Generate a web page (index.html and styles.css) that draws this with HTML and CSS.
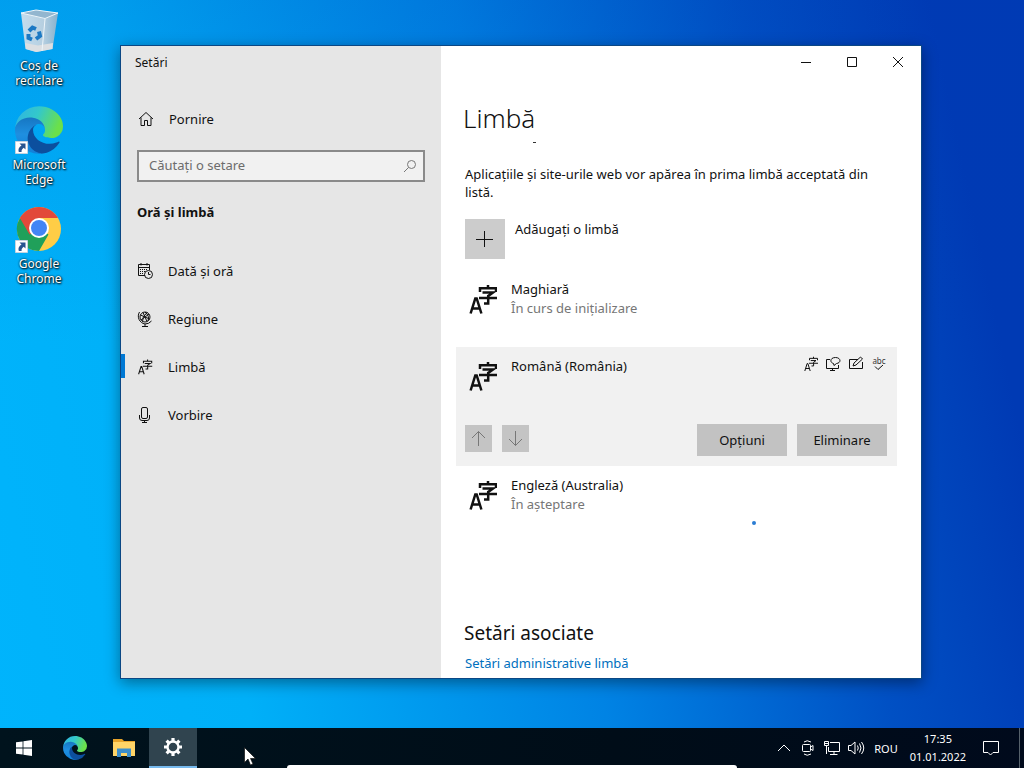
FILE: index.html
```html
<!DOCTYPE html>
<html lang="ro">
<head>
    <meta charset="UTF-8">
    <meta name="viewport" content="width=device-width, initial-scale=1.0">
    <title>Setări</title>
    <link rel="stylesheet" href="styles.css">
</head>
<body>
    <!-- Shared icons -->
    <svg class="defs" aria-hidden="true">
        <defs>
            <linearGradient id="edge-blue" x1="0" y1="0" x2="0" y2="1"><stop offset="0" stop-color="#1573be"/><stop offset="0.5" stop-color="#1f8fe0"/><stop offset="1" stop-color="#1180d8"/></linearGradient>
            <linearGradient id="edge-green" x1="0" y1="0" x2="1" y2="0.3"><stop offset="0" stop-color="#2fb2e4"/><stop offset="0.5" stop-color="#33c8cb"/><stop offset="1" stop-color="#6be04a"/></linearGradient>
            <linearGradient id="bin-side" x1="0" y1="0" x2="1" y2="0"><stop offset="0" stop-color="#d3e2ee"/><stop offset="0.6" stop-color="#c6d3df"/><stop offset="1" stop-color="#93b3cb"/></linearGradient>
        </defs>
        <symbol id="i-lang" viewBox="0 0 28 31">
            <path d="M1.6 29.5L6.3 14.5H7.7L12.4 29.5M3.4 24.5H10.6M11 8V4.2H27V8M19 1V4M13.5 8.6H24L19.2 12V19.4H15M10 14H28" fill="none" stroke="currentColor"/>
        </symbol>
        <symbol id="i-edge" viewBox="0 0 256 256">
            <path fill="#0c4f9e" d="M231 190.5c-3.4 1.8-6.9 3.4-10.5 4.7a101.7 101.7 0 0 1-35.9 6.5c-47.3 0-88.5-32.6-88.5-74.3 0-11.4 6.4-21.8 16.6-27.3-42.8 1.8-53.8 46.4-53.8 72.5 0 73.9 68.1 81.4 82.8 81.4 7.9 0 19.8-2.3 27-4.6l1.3-.4a128 128 0 0 0 66.6-52.8 4 4 0 0 0-5.6-5.7z"/>
            <path fill="url(#edge-blue)" d="M105.7 241.4a79.2 79.2 0 0 1-22.7-21.3 80.7 80.7 0 0 1 29.5-120c3.2-1.5 8.5-4.2 15.6-4.1a32.4 32.4 0 0 1 25.7 13 31.9 31.9 0 0 1 6.3 18.7c0-.2 24.5-79.6-80-79.6-43.9 0-80 41.7-80 78.2 0 19.3 4 38.7 12.2 56.2a128 128 0 0 0 152.1 66.5 75.5 75.5 0 0 1-58.5-7.6z"/>
            <path fill="url(#edge-green)" d="M152.3 148.9c-.8 1-3.3 2.5-3.3 5.7 0 2.6 1.7 5.1 4.7 7.2 14.4 10 41.5 8.7 41.6 8.7 10.7 0 21.1-2.9 30.3-8.3a61.4 61.4 0 0 0 30.4-52.9c.3-22.4-8-37.3-11.3-43.9C223.5 24.5 177.8 1 128 1a128 128 0 0 0-128 126.2c.5-36.5 36.8-66 80-66 3.5 0 23.5.3 42 10.1 16.3 8.6 24.9 18.9 30.8 29.2 6.2 10.7 7.3 24.1 7.3 29.5 0 5.3-2.7 13.3-7.8 19.9z"/>
        </symbol>
        <symbol id="i-shortcut" viewBox="0 0 13 13">
            <path fill="#fff" stroke="#c5d3df" d="M.5.5h12v12H.5z"/>
            <path fill="#27548f" d="M4.5 2.5H10.500V8.500L8.700 6.700C7 8 6.300 9.300 6.600 11H3.800C2.800 8.200 4 6 6.500 4.500z"/>
        </symbol>
    </svg>

    <div class="desktop">
        <nav class="shortcuts">
            <a class="shortcut" href="#">
                <svg width="48" height="48" viewBox="4 0 48 48">
                    <path fill="url(#bin-side)" d="M10 6L47 6L41.500 42L25 45L14.500 42z" opacity=".92"/>
                    <path fill="#93b6cf" d="M10 6L25 3L47 6L34 12z"/>
                    <path fill="#dcdfe2" d="M14 36L27 38.500L42 36L41.500 42L25.500 45L15 42z"/>
                    <path fill="none" stroke="#edf5fa" d="M10 6L25 3L47 6L34 11.500zM34 12L31 44"/>
                    <path fill="none" stroke="#1c79c4" stroke-width="4" d="M18 24L21.500 20.500L25 22M28 24.500L29 29L25 32M21 32.500L17.500 31L17.500 27"/>
                </svg>
                <span>Coș de<br>reciclare</span>
            </a>
            <a class="shortcut" href="#">
                <svg width="48" height="48" viewBox="0 0 48 48">
                    <use href="#i-edge" width="48" height="48"/>
                    <use href="#i-shortcut" y="35" width="13" height="13"/>
                </svg>
                <span>Microsoft<br>Edge</span>
            </a>
            <a class="shortcut" href="#">
                <svg width="48" height="48" viewBox="0 0 48 48">
                    <circle cx="24" cy="24" r="22" fill="#ffcd46"/>
                    <path fill="#20a05a" d="M24 24L4.900 13A22 22 0 0 0 24 46L33.500 29.500z"/>
                    <path fill="#e2493a" d="M24 24L14.500 29.500L4.900 13A22 22 0 0 1 43 13L24 13z"/>
                    <circle cx="24" cy="23" r="10" fill="#fff"/>
                    <circle cx="24" cy="23" r="8" fill="#4385f5"/>
                    <use href="#i-shortcut" y="35" width="13" height="13"/>
                </svg>
                <span>Google<br>Chrome</span>
            </a>
        </nav>

        <div class="window">
            <aside class="sidebar">
                <div class="window-title">Setări</div>
                <a class="home" href="#">
                    <svg width="16" height="16" viewBox="0 0 16 16"><path d="M1 8L8 1.500L15 8M3 6.500V14.500H6.500V9.500H9.500V14.500H13V6.500"/></svg>
                    Pornire
                </a>
                <label class="search">
                    <input type="text" placeholder="Căutați o setare" aria-label="Căutați o setare">
                    <svg width="14" height="14" viewBox="0 0 14 14"><circle cx="8.500" cy="5.500" r="4"/><path d="M5.500 8.500L1 13"/></svg>
                </label>
                <h2 class="category">Oră și limbă</h2>
                <nav class="menu">
                    <a href="#">
                        <svg width="16" height="16" viewBox="0 0 16 16"><path d="M8 12.500H1.500V1.500H12.500V7M1.500 4.500H12.500M4 0V2.500M10 0V2.500"/><path stroke-dasharray="1 1" d="M3 6.500H11M3 8.500H8M3 10.500H7"/><circle cx="11.500" cy="11.500" r="4"/><path d="M11.500 9V11.500H13.500"/></svg>
                        Dată și oră
                    </a>
                    <a href="#">
                        <svg width="16" height="16" viewBox="0 0 16 16"><circle cx="8" cy="6" r="5"/><path d="M3.500 4L12.500 8M4 9L12 3M6 1.500L10 10.500M10 1.500Q5 6 5.500 10.500M8 1Q13 5 11 10M2.500 1C-.5 6 2.500 12 8 13Q12 13 14.500 10M8 13V15.500M5 15.500H11"/></svg>
                        Regiune
                    </a>
                    <a class="active" href="#">
                        <svg width="16" height="16" stroke-width="2"><use href="#i-lang"/></svg>
                        Limbă
                    </a>
                    <a href="#">
                        <svg width="16" height="16" viewBox="0 0 16 16"><rect x="4.500" y=".5" width="6" height="11" rx="1.500"/><path d="M2.500 8V11Q2.500 13.500 5 13.500H10Q12.500 13.500 12.500 11V8M7.500 13.500V15.500M5 15.500H10"/></svg>
                        Vorbire
                    </a>
                </nav>
            </aside>

            <main class="content">
                <div class="caption">
                    <button aria-label="Minimizare"><svg width="12" height="12"><path d="M1 6.500H11"/></svg></button>
                    <button aria-label="Maximizare"><svg width="12" height="12"><path d="M1.500 1.500H10.500V10.500H1.500z"/></svg></button>
                    <button aria-label="Închidere"><svg width="12" height="12"><path d="M1 1L11 11M11 1L1 11"/></svg></button>
                </div>
                <div class="page">
                    <h1>Limbă</h1>
                    <div class="scrolled-edge"></div>
                    <p class="intro">Aplicațiile și site-urile web vor apărea în prima limbă acceptată din listă.</p>
                    <button class="add">
                        <span class="add-icon"><svg width="18" height="18"><path d="M8.500 1V17M0 9.500H17"/></svg></span>
                        Adăugați o limbă
                    </button>

                    <ul class="languages">
                        <li class="language">
                            <div class="language-head">
                                <svg class="language-icon" width="28" height="31"><use href="#i-lang"/></svg>
                                <div>Maghiară<small>În curs de inițializare</small></div>
                            </div>
                        </li>
                        <li class="language selected">
                            <div class="language-head">
                                <svg class="language-icon" width="28" height="31"><use href="#i-lang"/></svg>
                                <div>Română (România)</div>
                                <div class="features">
                                    <svg width="14" height="16" stroke-width="2"><use href="#i-lang"/></svg>
                                    <svg width="16" height="16" viewBox="0 0 16 16"><path d="M5 3.500H1.500V12.500H13.500V9M7.500 12.500V14.500M5 14.500H10"/><path d="M8.500 7.500C4.500 6.500 5 1.500 10.500 1.500C16 1.500 16.500 7 11.500 7.500L9 9.500z"/></svg>
                                    <svg width="16" height="16" viewBox="0 0 16 16"><path d="M10 3.500H1.500V12.500H14.500V6M5 10L6 7L12.500 1L14.500 3L8 9z"/></svg>
                                    <div class="spelling">abc<svg width="12" height="6"><path d="M2 1.500L5 4.500L10 0"/></svg></div>
                                </div>
                            </div>
                            <div class="actions">
                                <button class="move" aria-label="Sus" disabled><svg width="17" height="17"><path d="M8.500 16V1.500M2 8L8.500 1.500L15 8"/></svg></button>
                                <button class="move" aria-label="Jos" disabled><svg width="17" height="17"><path d="M8.500 1V15.500M2 9L8.500 15.500L15 9"/></svg></button>
                                <button class="action first">Opțiuni</button>
                                <button class="action">Eliminare</button>
                            </div>
                        </li>
                        <li class="language last">
                            <div class="language-head">
                                <svg class="language-icon" width="28" height="31"><use href="#i-lang"/></svg>
                                <div>Engleză (Australia)<small>În așteptare</small></div>
                            </div>
                            <div class="progress"></div>
                        </li>
                    </ul>

                    <h2 class="related">Setări asociate</h2>
                    <a class="link" href="#">Setări administrative limbă</a>
                </div>
            </main>
        </div>
    </div>

    <footer class="taskbar">
        <button class="task" aria-label="Start"><svg width="16" height="16" viewBox="0 0 16 16"><path fill="#fff" d="M0 2.300L6.600 1.400V7.600H0zM7.400 1.300L16 0V7.600H7.400zM0 8.400H6.600V14.600L0 13.700zM7.400 8.400H16V16L7.400 14.800z"/></svg></button>
        <button class="task edge" aria-label="Microsoft Edge"><svg width="24" height="24"><use href="#i-edge"/></svg></button>
        <button class="task" aria-label="Explorer">
            <svg width="22" height="18" viewBox="0 0 22 18"><path fill="#e7a42b" d="M0 0H9L11 2H22V6H0z"/><path fill="#ffd467" d="M0 3H22V17H0z"/><path fill="#3c8ecb" d="M4 18V9.500H18V18H14V14H8V18z"/></svg>
        </button>
        <button class="task running" aria-label="Setări">
            <svg width="20" height="20" viewBox="0 0 20 20"><circle cx="10" cy="10" r="5.500" fill="none" stroke="#fff" stroke-width="2.400"/><path stroke="#fff" stroke-width="3.200" d="M16 10H19M1 10H4M10 1V4M10 16V19M14.200 5.800L16.400 3.600M3.600 16.400L5.800 14.200M3.600 3.600L5.800 5.800M14.200 14.200L16.400 16.400"/></svg>
        </button>
        <div class="tray">
            <svg width="18" height="16" viewBox="0 0 18 16"><path d="M3 11L9 5L15 11"/></svg>
            <svg width="18" height="16" viewBox="0 0 18 16"><rect x="3.500" y="4.500" width="8" height="7" rx="1"/><path d="M11.500 7L14 5.500V10.500L11.500 9M5 2Q8 -.5 12 2M5 14Q8 16.500 12 14"/></svg>
            <svg width="18" height="16" viewBox="0 0 18 16"><path d="M7 2.500H16.500V11.500H5.500V7M11 11.500V14.500M7 14.500H14.500M1.500 1.500H5.500V5.500H1.500zM3.500 5.500V14M2 3.500H5"/></svg>
            <svg width="18" height="16" viewBox="0 0 18 16"><path d="M1.500 5.500H4L8 2V14L4 10.500H1.500zM10.500 5.500Q12 8 10.500 10.500M12.500 3.500Q15.500 8 12.500 12.500M14.500 2Q19 8 14.500 14"/></svg>
            <span class="keyboard">ROU</span>
            <time class="clock">17:35<br>01.01.2022</time>
            <svg width="18" height="18" viewBox="0 0 18 18"><path d="M1.500 2.500H16.500V13.500H11L8.500 16L6 13.500H1.500z"/></svg>
        </div>
        <div class="show-desktop"></div>
    </footer>

    <div class="home-bar"></div>
    <svg class="cursor" width="12" height="19" viewBox="0 0 12 19"><path fill="#fff" stroke="#111" stroke-width=".7" d="M.5.5V15.500L4 12L6.500 18L9 17L6.500 11.500H11.500z"/></svg>
</body>
</html>
```
FILE: styles.css
```css
* { box-sizing: border-box; }
html, body { height: 100%; }
body { margin: 0; display: flex; flex-direction: column; overflow: hidden; font-family: "Noto Sans", "Open Sans", sans-serif; font-size: 13px; color: #111; background: linear-gradient(180deg, rgba(0, 60, 180, 0.16), transparent 45%), linear-gradient(78deg, #00b4fc 0%, #00b0f8 22%, #0083e4 52%, #0050c4 76%, #003ab4 92%); }
h1, h2, p, ul { margin: 0; padding: 0; font-weight: normal; }
a { color: inherit; text-decoration: none; }
button { font: inherit; color: inherit; border: none; padding: 0; background: none; }
svg { flex-shrink: 0; display: block; }
.defs { position: absolute; width: 0; height: 0; }

/* Desktop */
.desktop { flex: 1; position: relative; min-height: 0; }
.shortcuts { display: flex; flex-direction: column; gap: 18px; width: 78px; padding-top: 7px; }
.shortcut { display: flex; flex-direction: column; align-items: center; gap: 3px; text-align: center; font-size: 12px; line-height: 15px; color: #fff; text-shadow: 1px 1px 2px #000, 0 0 2px #000; }

/* Settings window */
.window { position: absolute; top: 45px; right: 102px; bottom: 49px; left: 120px; display: flex; overflow: hidden; border: 1px solid #0b4784; background: #fff; box-shadow: 0 4px 14px rgba(0, 0, 0, 0.4); }
.sidebar { width: 320px; flex-shrink: 0; background: #e6e6e6; }
.sidebar svg { fill: none; stroke: #111; }
.window-title { padding: 8px 14px; font-size: 12px; line-height: 18px; }
.home { display: flex; align-items: center; gap: 15px; height: 40px; margin-top: 19px; padding-left: 17px; }
.search { display: flex; align-items: center; height: 32px; margin: 11px 16px 0; padding: 0 6px 0 10px; border: 2px solid #8a8a8a; background: #f1f1f1; }
.search input { flex: 1; min-width: 0; padding: 0 0 2px; border: none; outline: none; font: inherit; background: none; }
.search input::placeholder { color: #6c6c6c; opacity: 1; }
.search svg { stroke: #777; }
.category { margin: 20px 16px 0; font-size: 13px; line-height: 20px; font-weight: bold; }
.menu { margin-top: 25px; }
.menu a { display: flex; align-items: center; gap: 15px; height: 48px; padding-left: 16px; position: relative; }
.menu .active::before { content: ""; position: absolute; left: 0; top: 11px; width: 4px; height: 24px; background: #0078d4; }

.content { flex: 1; min-width: 0; }
.caption { display: flex; justify-content: flex-end; }
.caption button { width: 46px; height: 32px; display: flex; align-items: center; justify-content: center; }
.caption svg, .add svg, .move svg { fill: none; stroke: #111; }
.page { padding: 22px 24px 0 15px; }
h1 { padding-left: 7px; font-size: 26px; line-height: 36px; font-weight: 300; }
.scrolled-edge { width: 3px; height: 1px; margin: 6px 0 22px 77px; background: #333; }
.intro { padding: 0 9px; line-height: 18px; }
.add { display: flex; gap: 10px; margin: 18px 9px 11px; line-height: 20px; }
.add-icon { display: flex; align-items: center; justify-content: center; width: 40px; height: 40px; background: #ccc; }

.languages { list-style: none; }
.language { min-height: 77px; padding: 10px 10px 10px 9px; }
.language-head { display: flex; gap: 14px; line-height: 19px; }
.language-head small { display: block; font-size: 13px; color: #767676; }
.language-icon { margin: 4px 0 0 4px; stroke-width: 2.5; }
.selected { min-height: 118px; background: #f1f1f1; }
.features { display: flex; gap: 7px; margin-left: auto; margin-top: -1px; }
.features svg { fill: none; stroke: #111; }
.spelling { display: flex; flex-direction: column; align-items: center; width: 16px; font-size: 8px; line-height: 9px; color: #333; }
.actions { display: flex; gap: 10px; margin-top: 32px; }
.move { display: flex; align-items: center; justify-content: center; width: 27px; height: 27px; margin-top: 1px; background: #c4c4c4; }
.move svg { stroke: #777; }
.action { width: 90px; height: 32px; background: #c2c2c2; }
.action.first { margin-left: auto; }
.last { min-height: 153px; }
.progress { width: 4px; height: 4px; margin: 7px 0 0 287px; border-radius: 50%; background: #2b7cd3; }
.related { padding-left: 8px; font-size: 19px; line-height: 28px; }
.link { display: block; margin-top: 6px; padding-left: 9px; line-height: 20px; color: #0070be; }

/* Taskbar */
.taskbar { display: flex; gap: 1px; height: 40px; flex-shrink: 0; color: #fff; font-size: 11px; background: linear-gradient(90deg, #00131d, #000d18 60%, #000a1c); }
.task { display: flex; align-items: center; justify-content: center; width: 48px; }
.edge { margin-left: 2px; }
.running { background: #30444f; border-bottom: 2px solid #76b9ed; }
.tray { display: flex; align-items: center; gap: 6px; margin-left: auto; }
.tray svg { fill: none; stroke: #fff; }
.keyboard { margin: 0 6px 0 3px; }
.clock { margin-right: 10px; text-align: center; line-height: 18px; }
.show-desktop { width: 5px; margin-left: 18px; border-left: 1px solid #56616b; }
.home-bar { position: absolute; right: 28%; bottom: 0; left: 28%; height: 3px; border-radius: 6px 6px 0 0; background: #fff; }
.cursor { position: absolute; left: 244px; bottom: 2px; }
```
